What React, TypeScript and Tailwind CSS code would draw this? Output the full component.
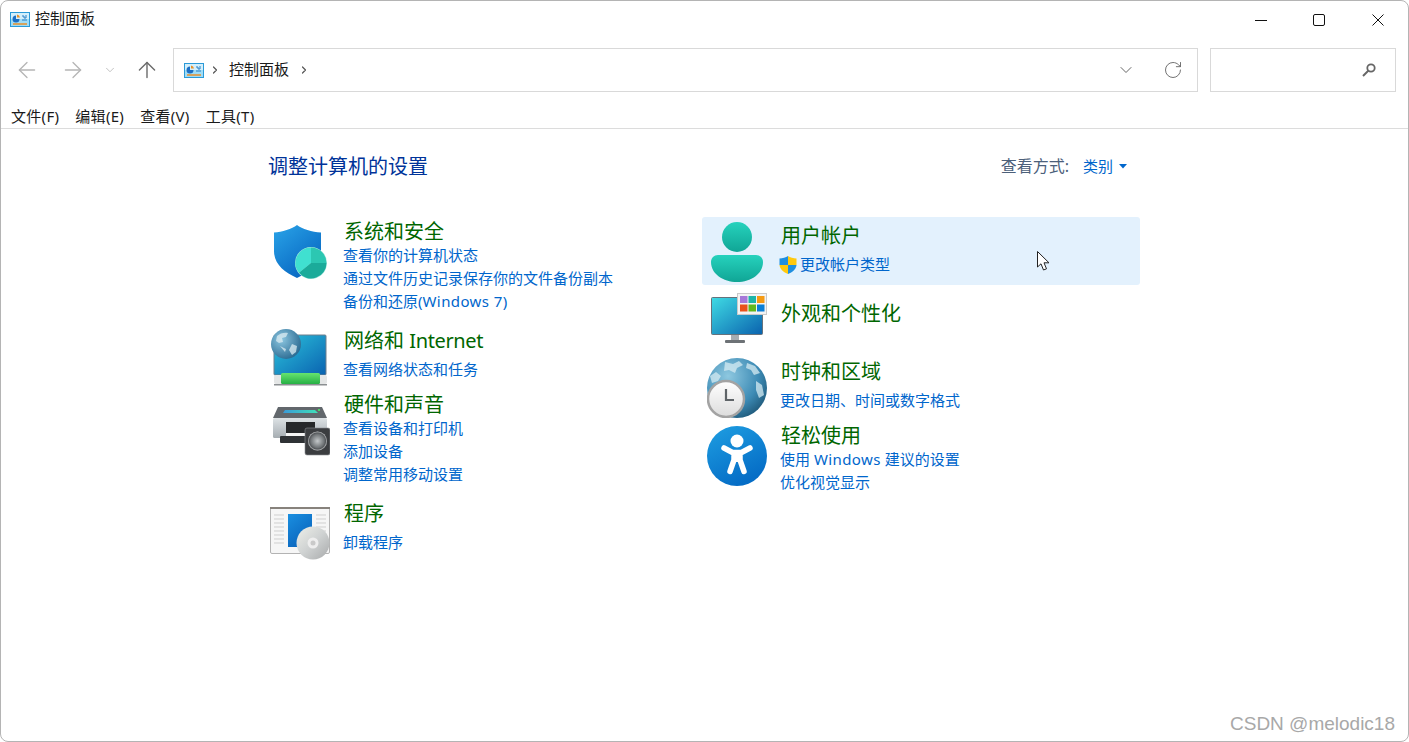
import type { ReactNode } from 'react';
import { ArrowLeft, ArrowRight, ArrowUp, ChevronDown, ChevronRight, RotateCw } from 'lucide-react';

function PanelIcon() {
    return (
        <svg width="20" height="15" viewBox="0 0 20 15" className="shrink-0">
            <rect x="0.5" y="0.5" width="19" height="14" fill="#9fdcf6" stroke="#2a9ad8" />
            <rect x="1" y="1" width="18" height="6" fill="#d3effb" />
            <path d="M6 3.5a3.5 3.5 0 1 0 3.5 3.5H6z" fill="#1c6fc4" />
            <path d="M7 2.5a3.5 3.5 0 0 1 3 3H7z" fill="#e8912a" />
            <path d="M12 4h2v2h2V3M12 8h5" stroke="#2a7fc4" fill="none" />
            <path d="M3 12h14" stroke="#e8912a" strokeWidth="1.4" />
        </svg>
    );
}

function ShieldIcon() {
    return (
        <svg width="60" height="60" viewBox="0 0 60 60">
            <defs>
                <linearGradient id="sh" x1="0" y1="0" x2="0.7" y2="1">
                    <stop offset="0" stopColor="#2aa4e8" />
                    <stop offset="1" stopColor="#0664c0" />
                </linearGradient>
            </defs>
            <path d="M27 3C22 7 12 10 4 10.500V29C4 42 14 50 27 56C40 50 51 42 51 29V10.500C42 10 32 7 27 3z" fill="url(#sh)" />
            <circle cx="41" cy="41" r="16" fill="#a8e6dd" />
            <path d="M41 41V25.500A15.500 15.500 0 0 0 29 50.800z" fill="#40e0d0" />
            <path d="M41 41V25.500A15.500 15.500 0 0 1 56.500 41z" fill="#2cc7b2" />
            <path d="M41 41H56.500A15.500 15.500 0 0 1 29 50.800z" fill="#1bab9a" />
        </svg>
    );
}

function NetworkIcon() {
    return (
        <svg width="60" height="60" viewBox="0 0 60 60">
            <defs>
                <linearGradient id="nm" x1="0" y1="0" x2="1" y2="1">
                    <stop offset="0" stopColor="#2cc4dc" />
                    <stop offset="1" stopColor="#0a62b0" />
                </linearGradient>
                <radialGradient id="ng" cx="0.35" cy="0.35" r="0.8">
                    <stop offset="0" stopColor="#8cc6e0" />
                    <stop offset="1" stopColor="#1f5f88" />
                </radialGradient>
                <linearGradient id="nb" x1="0" y1="0" x2="0" y2="1">
                    <stop offset="0" stopColor="#66e46e" />
                    <stop offset="1" stopColor="#27b045" />
                </linearGradient>
            </defs>
            <rect x="4" y="9" width="52" height="40" rx="1" fill="url(#nm)" stroke="#6f7f8c" />
            <rect x="4" y="49" width="53" height="9" rx="2" fill="#e4e6e6" />
            <rect x="11" y="47" width="39" height="11" rx="1.500" fill="url(#nb)" />
            <rect x="4" y="58" width="53" height="1.500" fill="#8b8f92" />
            <circle cx="16" cy="18" r="15" fill="url(#ng)" />
            <path d="M7 10c3-3 8-4 11-3l-2 4-4 1 1 4-4 1-3-2zM22 18l5 2-1 6-4 3-3-5zM10 20l6 3-1 3z" fill="#dcecf2" opacity="0.75" />
        </svg>
    );
}

function PrinterIcon() {
    return (
        <svg width="60" height="60" viewBox="0 0 60 60">
            <defs>
                <linearGradient id="pb" x1="0" y1="0" x2="0" y2="1">
                    <stop offset="0" stopColor="#dde2e5" />
                    <stop offset="1" stopColor="#a6adb2" />
                </linearGradient>
                <linearGradient id="ps" x1="0" y1="0" x2="1" y2="0">
                    <stop offset="0" stopColor="#3a9ad8" />
                    <stop offset="1" stopColor="#3fe0b8" />
                </linearGradient>
                <radialGradient id="pc" cx="0.5" cy="0.5" r="0.5">
                    <stop offset="0" stopColor="#c4c8ca" />
                    <stop offset="0.7" stopColor="#6f7376" />
                    <stop offset="0.85" stopColor="#55585b" />
                    <stop offset="1" stopColor="#c6c8ca" />
                </radialGradient>
            </defs>
            <path d="M8 7H52L57 18H3z" fill="#62676c" />
            <path d="M15 10H45L48 13H13z" fill="url(#ps)" />
            <rect x="3" y="18" width="54" height="20" rx="1.500" fill="url(#pb)" />
            <rect x="16" y="22" width="29" height="11" fill="#26282a" />
            <rect x="16" y="33" width="20" height="3" fill="#f4f4f4" />
            <rect x="10" y="36" width="28" height="7" rx="1" fill="#2f3235" />
            <rect x="48" y="9" width="2" height="2" fill="#4ed36a" />
            <rect x="35" y="28" width="25" height="27" rx="2" fill="#3b3d40" stroke="#8a8d90" strokeWidth="0.6" />
            <circle cx="47.500" cy="41" r="9.500" fill="url(#pc)" />
        </svg>
    );
}

function ProgramIcon() {
    return (
        <svg width="60" height="60" viewBox="0 0 60 60">
            <defs>
                <linearGradient id="pg" x1="0" y1="0" x2="0.6" y2="1">
                    <stop offset="0" stopColor="#1a8fe0" />
                    <stop offset="1" stopColor="#0a64bc" />
                </linearGradient>
                <linearGradient id="cd" x1="0" y1="0" x2="1" y2="1">
                    <stop offset="0" stopColor="#eef0ea" />
                    <stop offset="0.5" stopColor="#cfd2d2" />
                    <stop offset="1" stopColor="#a8aaab" />
                </linearGradient>
            </defs>
            <rect x="0.500" y="4.500" width="59" height="46" rx="1.500" fill="#f6f6f6" stroke="#b3b3b3" />
            <rect x="0" y="4" width="60" height="2" fill="#87827c" />
            <path d="M4 12h10M4 16h10M4 20h10M4 24h10M4 28h10M4 32h10M4 36h10M4 40h10M46 12h10M46 16h10M46 20h10M46 24h10M46 28h10" stroke="#cfcfcf" />
            <rect x="18" y="11" width="24" height="33" fill="url(#pg)" />
            <circle cx="43" cy="40" r="16.500" fill="url(#cd)" />
            <circle cx="43" cy="40" r="5.500" fill="#eeeeee" />
            <circle cx="43" cy="40" r="2.500" fill="#c9c9c9" />
        </svg>
    );
}

function UserIcon() {
    return (
        <svg width="60" height="60" viewBox="0 0 60 60">
            <defs>
                <linearGradient id="uh" x1="0" y1="0" x2="0" y2="1">
                    <stop offset="0" stopColor="#26d2bd" />
                    <stop offset="1" stopColor="#10a595" />
                </linearGradient>
            </defs>
            <circle cx="30" cy="15" r="15" fill="url(#uh)" />
            <path d="M11 33H49C53 33 56 36 56 40C56 52 44 60 30 60C16 60 4 52 4 40C4 36 7 33 11 33z" fill="url(#uh)" />
        </svg>
    );
}

function DisplayIcon() {
    return (
        <svg width="60" height="60" viewBox="0 0 60 60">
            <defs>
                <linearGradient id="dm" x1="0" y1="0" x2="1" y2="1">
                    <stop offset="0" stopColor="#3fdbe4" />
                    <stop offset="1" stopColor="#0a62ae" />
                </linearGradient>
            </defs>
            <rect x="4.500" y="7.500" width="51" height="37" rx="1" fill="url(#dm)" stroke="#66727c" />
            <rect x="24" y="45" width="8" height="6" fill="#a7adb2" />
            <rect x="18" y="50" width="20" height="3" rx="1" fill="#6d7276" />
            <rect x="30.500" y="3.500" width="29" height="21" fill="#f3f3f3" stroke="#c9c9c9" />
            <rect x="33" y="6" width="7.500" height="7" fill="#a678d8" />
            <rect x="41.500" y="6" width="7.500" height="7" fill="#1db5a8" />
            <rect x="50" y="6" width="7.500" height="7" fill="#f59a13" />
            <rect x="33" y="14.500" width="7.500" height="7" fill="#e8521a" />
            <rect x="41.500" y="14.500" width="7.500" height="7" fill="#62b81c" />
            <rect x="50" y="14.500" width="7.500" height="7" fill="#0a7fd6" />
        </svg>
    );
}

function ClockIcon() {
    return (
        <svg width="60" height="60" viewBox="0 0 60 60">
            <defs>
                <radialGradient id="cg" cx="0.35" cy="0.3" r="0.85">
                    <stop offset="0" stopColor="#8ec8e0" />
                    <stop offset="0.6" stopColor="#3d8bb5" />
                    <stop offset="1" stopColor="#164a68" />
                </radialGradient>
                <linearGradient id="cf" x1="0" y1="0" x2="0" y2="1">
                    <stop offset="0" stopColor="#ffffff" />
                    <stop offset="1" stopColor="#dcdcdc" />
                </linearGradient>
            </defs>
            <circle cx="30" cy="30" r="30" fill="url(#cg)" />
            <path d="M18 4l8 2 6-3 4 4-6 3-2 5-6-3-5 1zM3 18l6-4 5 4-3 5-6 2zM40 5l8 3 5 7-6 2-3-5-5-2zM49 23l6 4 2 10-5 3-3-8z" fill="#d6ebf2" opacity="0.75" />
            <circle cx="19" cy="41" r="18" fill="url(#cf)" stroke="#a3a3a3" strokeWidth="2.500" />
            <path d="M19 31V42H27" fill="none" stroke="#5f6468" strokeWidth="2.200" />
        </svg>
    );
}

function AccessIcon() {
    return (
        <svg width="60" height="60" viewBox="0 0 60 60">
            <defs>
                <linearGradient id="ag" x1="0" y1="0" x2="0.5" y2="1">
                    <stop offset="0" stopColor="#1f9fe2" />
                    <stop offset="1" stopColor="#056dc6" />
                </linearGradient>
            </defs>
            <circle cx="30" cy="30" r="30" fill="url(#ag)" />
            <circle cx="30" cy="15" r="6.500" fill="#ffffff" />
            <path d="M17 22L25.500 26.500H34.500L43 22M27 28V34L23 45.500M33 28V34L37 45.500" fill="none" stroke="#ffffff" strokeWidth="5.500" strokeLinecap="round" strokeLinejoin="round" />
            <rect x="26" y="26" width="8" height="10" fill="#ffffff" />
        </svg>
    );
}

function UacShield() {
    return (
        <svg width="18" height="18" viewBox="0 0 18 18" className="shrink-0">
            <path d="M9 0C7 1.500 3.500 2.500 0.500 2.500V9H9z" fill="#1f8fe0" />
            <path d="M9 0C11 1.500 14.500 2.500 17.500 2.500V9H9z" fill="#ffc90e" />
            <path d="M0.500 9C1 13 4.500 16.500 9 18V9z" fill="#ffc90e" />
            <path d="M17.500 9C17 13 13.500 16.500 9 18V9z" fill="#1f8fe0" />
        </svg>
    );
}

function SearchGlyph() {
    return (
        <svg width="16" height="16" viewBox="0 0 16 16">
            <circle cx="10" cy="6" r="3.700" fill="none" stroke="#666666" strokeWidth="1.800" />
            <path d="M7.500 8.500L2 14" stroke="#666666" strokeWidth="2" />
        </svg>
    );
}

function Pointer() {
    return (
        <svg width="14" height="21" viewBox="0 0 14 21" className="absolute left-[1036px] top-[250px]">
            <path d="M0.500 0.500V16L4 12.800L6.500 19L9.500 17.800L7 11.800H12z" fill="#ffffff" stroke="#222222" strokeWidth="1" />
        </svg>
    );
}

type CategoryProps = {
    icon: ReactNode;
    title: ReactNode;
    links: ReactNode[];
    box: string;
    iconBox: string;
    text: string;
    linksBox: string;
};

function Category({ icon, title, links, box, iconBox, text, linksBox }: CategoryProps) {
    return (
        <div className={`flex ${box}`}>
            <div className={`shrink-0 ${iconBox}`}>{icon}</div>
            <div className={text}>
                <div className="h-7 text-[20px] leading-7 text-[#006600] whitespace-nowrap">{title}</div>
                <div className={`flex flex-col ${linksBox}`}>
                    {links.map((l, i) => (
                        <div key={i} className="flex items-center h-[23px] text-[15px] leading-[23px] text-[#0066cc] whitespace-pre">{l}</div>
                    ))}
                </div>
            </div>
        </div>
    );
}

export default function App() {
    return (
        <div className="relative w-[1409px] h-[742px] overflow-hidden bg-white border border-[#b4b4b4] rounded-lg text-[#1a1a1a] font-['Noto_Sans','Noto_Sans_CJK_SC',sans-serif]">
            {/* title bar */}
            <div className="flex items-center h-[37px] pl-[9px]">
                <PanelIcon />
                <span className="ml-[5px] pb-[2px] text-[15px]">控制面板</span>
                <div className="ml-auto flex">
                    <div className="flex items-center justify-center w-[58px] h-[37px]">
                        <svg width="12" height="12" viewBox="0 0 12 12"><path d="M0 6.500H12" stroke="#111111" /></svg>
                    </div>
                    <div className="flex items-center justify-center w-[58px] h-[37px]">
                        <svg width="12" height="12" viewBox="0 0 12 12"><rect x="0.500" y="0.500" width="11" height="11" rx="1.500" fill="none" stroke="#111111" /></svg>
                    </div>
                    <div className="flex items-center justify-center w-[60px] h-[37px]">
                        <svg width="12" height="12" viewBox="0 0 12 12"><path d="M0.500 0.500L11.500 11.500M11.500 0.500L0.500 11.500" stroke="#111111" /></svg>
                    </div>
                </div>
            </div>

            {/* nav row */}
            <div className="flex items-center h-11 mt-[10px]">
                <ArrowLeft size={26} strokeWidth={1.2} className="ml-[13px] text-[#b5b5b5]" />
                <ArrowRight size={26} strokeWidth={1.2} className="ml-5 text-[#b5b5b5]" />
                <ChevronDown size={14} strokeWidth={1.4} className="ml-[17px] text-[#b5b5b5]" />
                <ArrowUp size={26} strokeWidth={1.3} className="ml-[17px] text-[#6b6b6b]" />
                <div className="flex items-center w-[1025px] h-11 ml-[13px] pl-[10px] border border-[#d9d9d9]">
                    <PanelIcon />
                    <ChevronRight size={12} strokeWidth={2.4} className="ml-[5px] text-[#555555]" />
                    <span className="ml-[8px] pb-[2px] text-[15px]">控制面板</span>
                    <ChevronRight size={12} strokeWidth={2.4} className="ml-[9px] text-[#555555]" />
                    <ChevronDown size={20} strokeWidth={1.2} className="ml-auto text-[#666666]" />
                    <RotateCw size={20} strokeWidth={1.1} className="ml-[27px] mr-[14px] text-[#666666]" />
                </div>
                <div className="flex items-center justify-end w-[186px] h-11 ml-3 pr-[18px] border border-[#d9d9d9]">
                    <SearchGlyph />
                </div>
            </div>

            {/* menu bar */}
            <div className="flex items-center gap-4 h-[37px] pt-[13px] pl-[10px] border-b border-[#dcdcdc] text-[15px] tracking-[0.3px]">
                <span>文件(F)</span>
                <span>编辑(E)</span>
                <span>查看(V)</span>
                <span>工具(T)</span>
            </div>

            {/* content */}
            <div className="w-[872px] ml-[267px]">
                <div className="flex items-center justify-between h-7 mt-6 pr-[13px]">
                    <h1 className="text-[20px] text-[#003399]">调整计算机的设置</h1>
                    <div className="flex items-center pb-[2px] text-[15px]">
                        <span className="text-[16px] text-[#4c607a]">查看方式:</span>
                        <span className="ml-[14px] text-[#0066cc]">类别</span>
                        <svg width="8" height="5" viewBox="0 0 8 5" className="ml-[6px]"><path d="M0 0H8L4 4.500z" fill="#0066cc" /></svg>
                    </div>
                </div>

                <div className="flex mt-9">
                    <div className="w-[434px] shrink-0">
                        <Category
                            icon={<ShieldIcon />}
                            title="系统和安全"
                            links={['查看你的计算机状态', '通过文件历史记录保存你的文件备份副本', <>备份和还原(<span className="tracking-[0.4px]">Windows 7</span>)</>]}
                            box="h-[96px]"
                            iconBox="w-[76px] pl-[2px] pt-[5px]"
                            text="pt-px"
                            linksBox="-mt-[2px] -ml-px"
                        />
                        <Category
                            icon={<NetworkIcon />}
                            title={<>网络和 <span className="tracking-[-0.35px]">Internet</span></>}
                            links={['查看网络状态和任务']}
                            box="h-[55px] mt-[13px]"
                            iconBox="w-[76px] pl-[2px]"
                            text="pt-px"
                            linksBox="mt-[3px] -ml-px"
                        />
                        <Category
                            icon={<PrinterIcon />}
                            title="硬件和声音"
                            links={['查看设备和打印机', '添加设备', '调整常用移动设置']}
                            box="h-[96px] mt-[9px]"
                            iconBox="w-[76px] pl-[2px] pt-[10px]"
                            text="pt-px"
                            linksBox="-mt-[2px] -ml-px"
                        />
                        <Category
                            icon={<ProgramIcon />}
                            title="程序"
                            links={['卸载程序']}
                            box="h-[55px] mt-[13px]"
                            iconBox="w-[76px] pl-[2px] pt-[4px]"
                            text="pt-px"
                            linksBox="mt-[3px] -ml-px"
                        />
                    </div>
                    <div className="flex-1">
                        <Category
                            icon={<UserIcon />}
                            title="用户帐户"
                            links={[
                                <>
                                    <UacShield />
                                    <span className="ml-[3px]">更改帐户类型</span>
                                </>,
                            ]}
                            box="h-[68px] rounded-[3px] bg-[#e3f1fd]"
                            iconBox="w-[79px] pl-[5px] pt-[5px]"
                            text="pt-[5px]"
                            linksBox="mt-[3px] -ml-[2px]"
                        />
                        <Category
                            icon={<DisplayIcon />}
                            title="外观和个性化"
                            links={[]}
                            box="h-[64px]"
                            iconBox="w-[79px] pl-[5px] pt-[5px]"
                            text="pt-[15px]"
                            linksBox=""
                        />
                        <Category
                            icon={<ClockIcon />}
                            title="时钟和区域"
                            links={['更改日期、时间或数字格式']}
                            box="h-[55px] mt-2"
                            iconBox="w-[79px] pl-[5px] pt-px"
                            text="pt-px"
                            linksBox="mt-[3px] -ml-px"
                        />
                        <Category
                            icon={<AccessIcon />}
                            title="轻松使用"
                            links={[<>使用 <span className="tracking-[0.4px]">Windows</span> 建议的设置</>, '优化视觉显示']}
                            box="h-[73px] mt-[9px]"
                            iconBox="w-[79px] pl-[5px] pt-[5px]"
                            text="pt-px"
                            linksBox="-mt-[2px] -ml-px"
                        />
                    </div>
                </div>
            </div>

            <Pointer />
            <div className="absolute right-[13px] bottom-[3px] text-[19px] text-[#a8a8a8] font-['Liberation_Sans',sans-serif]">CSDN @melodic18</div>
        </div>
    );
}
